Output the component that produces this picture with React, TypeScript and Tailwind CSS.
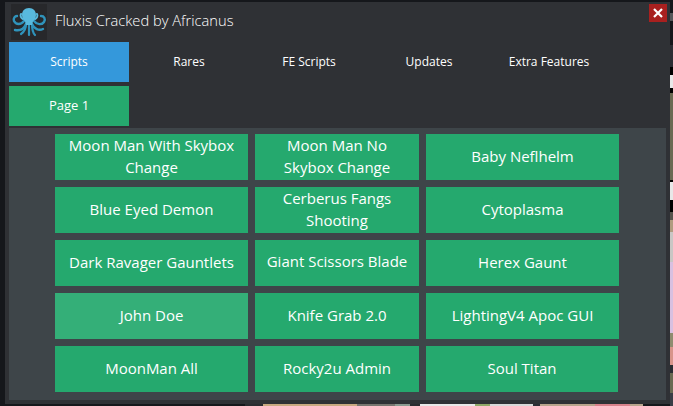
const tabs = ["Scripts", "Rares", "FE Scripts", "Updates", "Extra Features"];

const scripts = [
  { name: "Moon Man With Skybox Change" },
  { name: "Moon Man No Skybox Change" },
  { name: "Baby Neflhelm" },
  { name: "Blue Eyed Demon" },
  { name: "Cerberus Fangs Shooting" },
  { name: "Cytoplasma" },
  { name: "Dark Ravager Gauntlets" },
  { name: "Giant Scissors Blade", extra: "pb-[5px]" },
  { name: "Herex Gaunt" },
  { name: "John Doe", extra: "!bg-[#34af78]" },
  { name: "Knife Grab 2.0" },
  { name: "LightingV4 Apoc GUI" },
  { name: "MoonMan All" },
  { name: "Rocky2u Admin" },
  { name: "Soul Titan", extra: "w-[192px]" },
];

// bits of the desktop that show around the window
const rightStrip = [
  "h-[13px]",
  "h-[8px] bg-[#55575a]",
  "h-[24px]",
  "h-[22px] bg-[#2b2d33]",
  "h-[8px] bg-black",
  "h-[13px] bg-[#e8e8e8]",
  "h-[5px] bg-black",
  "h-[87px] bg-[#6a6a52]",
  "h-[2px] bg-black",
  "h-[18px] bg-[#e8e8e8]",
  "h-[12px] bg-black",
  "h-[8px] bg-[#55534c]",
  "h-[12px] bg-[#b09c80]",
  "h-[30px] bg-[#c9c6c4]",
  "h-[71px] bg-[#d8c0e0]",
  "h-[14px] bg-[#8f8c70]",
  "h-[18px] bg-[#d8948a]",
  "h-[8px] bg-[#2b2d33]",
  "h-[20px] bg-[#6a6a52]",
  "h-[13px] bg-[#3a3d45]",
];

const bottomStrip = [
  "w-[245px]",
  "w-[18px] bg-[#2a2c30]",
  "w-[94px] bg-[#c8a880]",
  "w-[38px] bg-[#77756f]",
  "w-[15px] bg-[#8a9a90]",
  "w-[10px] bg-[#2a2c30]",
  "w-[55px] bg-[#e8e8e8]",
  "w-[15px] bg-[#8fa868]",
  "w-[43px] bg-[#d8d8d8]",
  "w-[7px] bg-[#2b2d33]",
  "w-[55px] bg-[#b8a48c]",
  "w-[35px] bg-[#d8808a]",
  "w-[13px] bg-[#b8a48c]",
];

const Octopus = () => (
  <svg viewBox="0 0 36 34" className="w-[36px] h-[34px]" fill="none" strokeLinecap="round" strokeLinejoin="round">
    <path d="M13 16c-3 4-8 4-10 0-1-3 1-5 3-5M15 19c-2 5-6 7-11 6M23 16c3 4 8 4 10 1 2-3 0-6-3-6M21 19c2 5 7 7 11 5" stroke="#2f93bb" strokeWidth="2.4" />
    <path d="M15 19c0 5-2 8-5 10M21 19c0 5 1 9 3 11M18 19v11" stroke="#2f93bb" strokeWidth="2.2" />
    <path d="M12 14c-2-1-3-3-2-5M24 14c2-1 3-3 2-5" stroke="#58b9dd" strokeWidth="2" />
    <path d="M18 3c4.500 0 7 3 7 7 0 3-1.500 5-3 6.500l-1 3.500h-6l-1-3.500c-1.500-1.500-3-3.500-3-6.500 0-4 2.500-7 7-7z" fill="#58b9dd" />
  </svg>
);

export default function App() {
  return (
    <div className="w-[673px] h-[406px] overflow-hidden bg-[#15171b] font-['Open_Sans',sans-serif] text-white flex">
      <div className="w-[670px] h-[406px] shrink-0 flex flex-col">
        <div className="ml-[5px] mt-[2px] w-[665px] h-[402px] bg-[#2f3135] px-[4px] flex flex-col relative">
          <div className="h-[40px] flex items-center pl-[2px] gap-[8px]">
            <div className="w-[36px] h-[36px] bg-[#27282b] flex items-center justify-center"><Octopus /></div>
            <span className="text-[14.7px] font-light -mt-[3px]">Fluxis Cracked by Africanus</span>
          </div>
          <div className="flex">
            {tabs.map((tab, i) => (
              <div key={tab} className={`w-[120px] h-[40px] flex items-center justify-center text-[12px] ${i === 0 ? "bg-[#3498db]" : ""}`}>
                {tab}
              </div>
            ))}
          </div>
          <div className="w-[120px] h-[40px] mt-[4px] bg-[#25a96e] flex items-center justify-center text-[13px]">Page 1</div>
          <div className="mt-[2px] h-[272px] w-[657px] bg-[#3e4549] pl-[46px] pt-[6px]">
            <div className="grid grid-cols-[193px_164px_193px] gap-x-[7px] gap-y-[7px]">
              {scripts.map((s) => (
                <div
                  key={s.name}
                  className={`h-[46px] flex items-center justify-center text-center text-[15px] leading-[22px] px-[10px] pb-[2px] bg-[#25a96e] ${s.extra ?? ""}`}
                >
                  {s.name}
                </div>
              ))}
            </div>
          </div>
          <button className="absolute right-[3px] top-[2px] w-[18px] h-[18px] bg-[#a8201f] flex items-center justify-center">
            <svg viewBox="0 0 10 10" className="w-[10px] h-[10px]" stroke="white" strokeWidth="2.2"><path d="M1 1l8 8M9 1l-8 8" /></svg>
          </button>
        </div>
        <div className="h-[2px] flex">
          {bottomStrip.map((c, i) => <div key={i} className={c} />)}
        </div>
      </div>
      <div className="w-[3px] h-[406px] flex flex-col">
        {rightStrip.map((c, i) => <div key={i} className={c} />)}
      </div>
    </div>
  );
}
